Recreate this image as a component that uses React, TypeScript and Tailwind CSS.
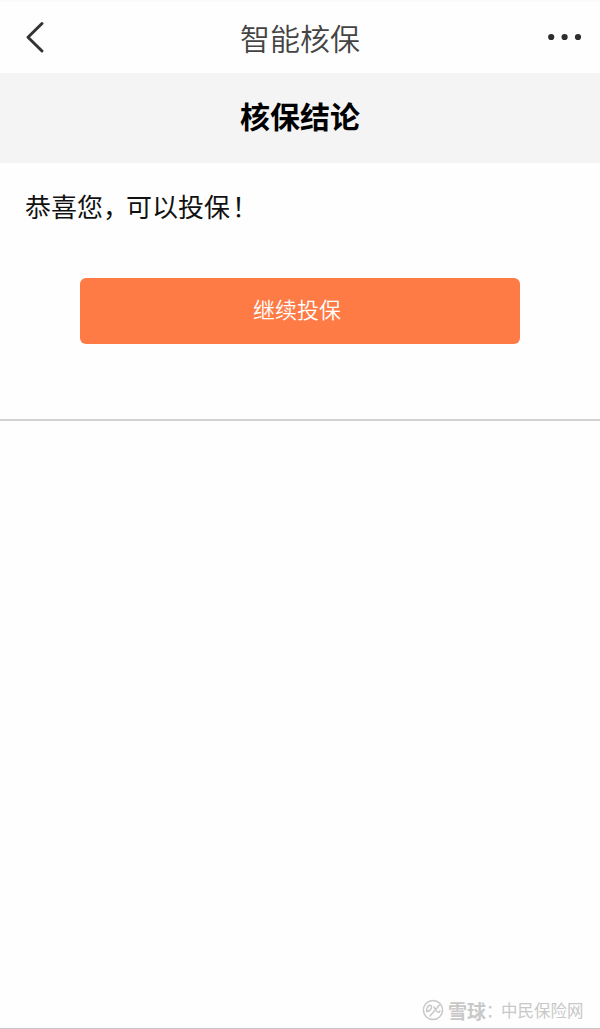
export default function App() {
  return (
    <div className="flex h-[1029px] w-[600px] flex-col bg-[#fefefe] font-['Noto_Sans_CJK_SC',sans-serif]">
      <header className="grid h-[73px] grid-cols-[1fr_auto_1fr] items-center border-t-2 border-[#fafafa] pr-[18px] pl-[24px] text-[#444]">
        <svg className="mb-px" width="22" height="34" viewBox="0 0 22 34" fill="none" stroke="#333" strokeWidth="3" strokeLinecap="round" strokeLinejoin="round"><path d="M18 3.5 4 17.3 18 31" /></svg>
        <h1 className="pr-[6px] pb-px text-[30px] leading-none font-[350]">智能核保</h1>
        <svg className="mb-[2px] justify-self-end" width="34" height="8" viewBox="0 0 34 8" fill="#2d2d2d"><circle cx="3.2" cy="4" r="3.1" /><circle cx="16.6" cy="4" r="3.1" /><circle cx="30" cy="4" r="3.1" /></svg>
      </header>
      <div className="flex h-[90px] items-center justify-center bg-[#f4f4f4] pb-[6px]">
        <h2 className="text-[30px] leading-none font-bold text-black">核保结论</h2>
      </div>
      <main className="flex h-[258px] flex-col border-b-2 border-[#d2d2d2] px-[25px] pt-[28px]">
        <p className="text-[26px] leading-[30px] text-[#111]">恭喜您<span className="tracking-[-3px]">，</span>可以投保<span className="ml-[2px]">！</span></p>
        <button className="mx-[55px] mt-[57px] h-[66px] shrink-0 rounded-[6px] bg-[#ff7b46] pr-[6px] pb-[6px] text-[22px] font-[350] text-white">继续投保</button>
      </main>
      <footer className="mt-auto flex h-[37px] items-center border-b border-[#c8c8c8] pl-[422px] text-[16.5px] leading-none text-[#c8c8c8]">
        <svg className="mr-[4px] shrink-0" width="22" height="22" viewBox="0 0 22 22" fill="none" stroke="#c8c8c8" strokeWidth="1.5" strokeLinecap="round" strokeLinejoin="round"><circle cx="11" cy="11" r="9.6" /><path d="M9.5 7C7 5 4.5 8 4.5 12.5 7.5 12.5 10 10 9.5 7ZM8 17 17.5 6M12 8 13.5 10.5M14.5 12C15.5 14 17 13.5 18 12" /></svg>
        <strong className="shrink-0 text-[19px]">雪球</strong><span className="w-[15px] shrink-0">：</span><span className="shrink-0">中民保险网</span>
      </footer>
    </div>
  );
}
